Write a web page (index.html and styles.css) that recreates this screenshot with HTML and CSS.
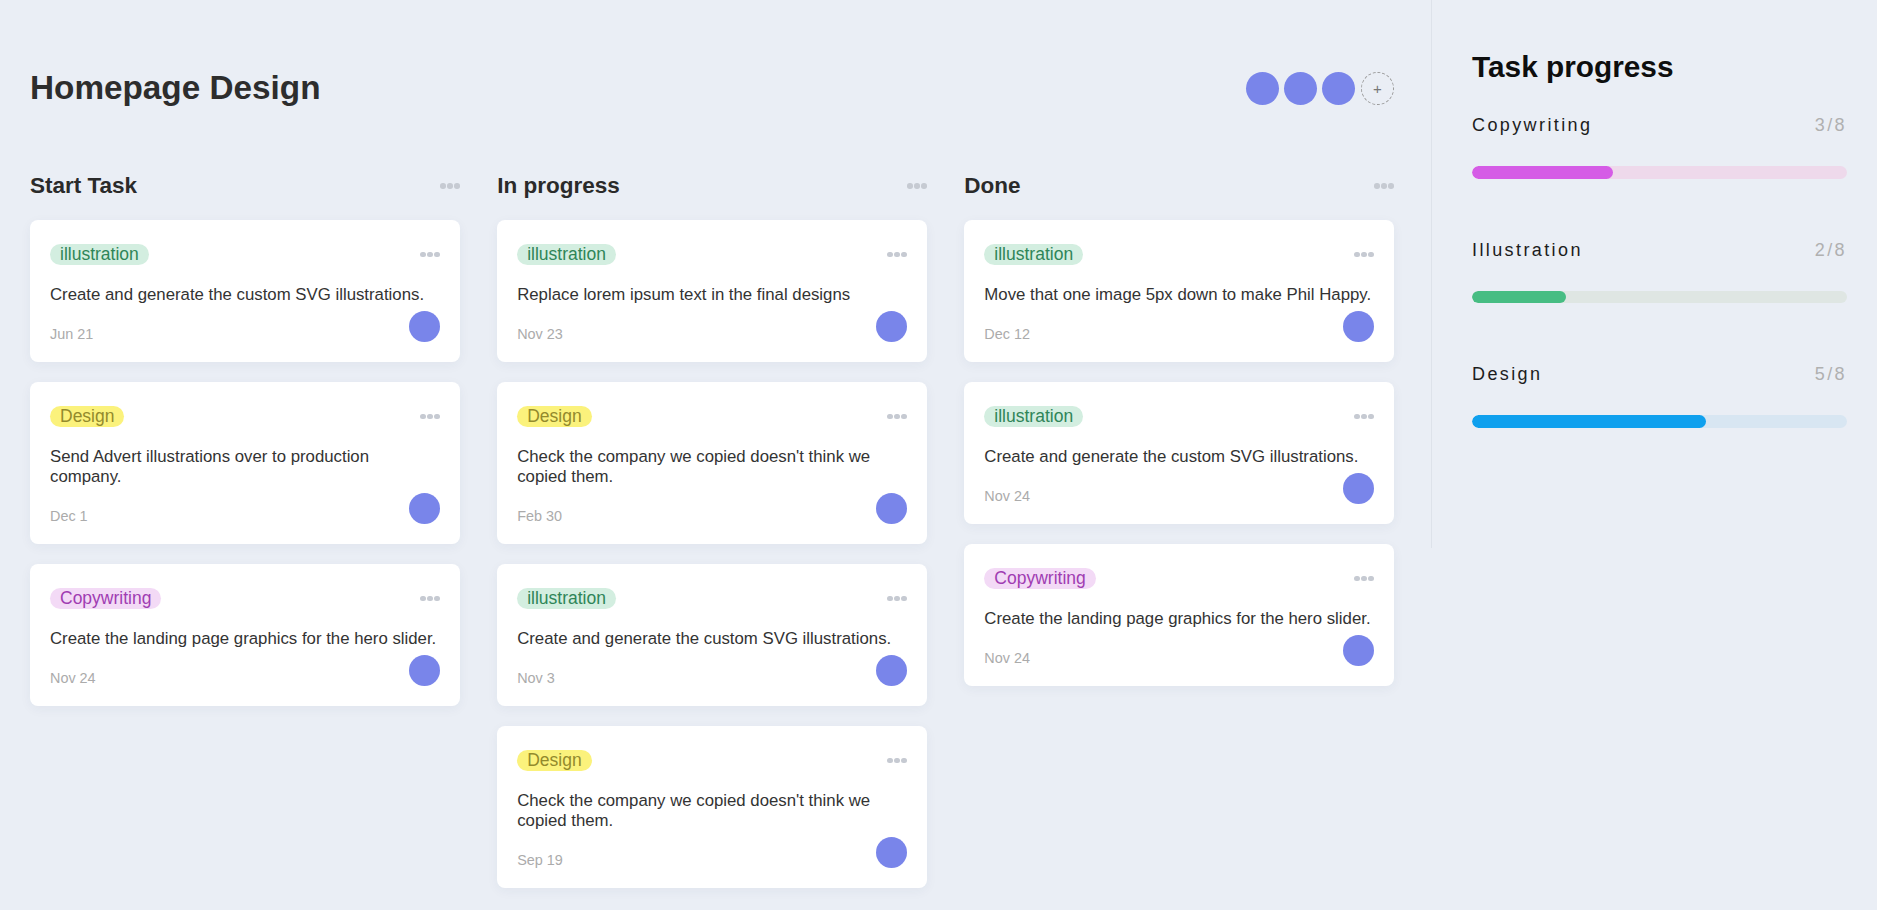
FILE: index.html
```html
<!DOCTYPE html>
<html lang="en">
<head>
  <meta charset="UTF-8">
  <title>Homepage Design</title>
  <link rel="stylesheet" href="styles.css">
</head>
<body>
  <div class="page">
    <main class="board">
      <header class="board-head">
        <h1>Homepage Design</h1>
        <div class="members">
          <span class="member"></span>
          <span class="member"></span>
          <span class="member"></span>
          <span class="member-add">+</span>
        </div>
      </header>

      <div class="columns">
        <!-- Start Task -->
        <section class="column">
          <div class="column-head">
            <h2>Start Task</h2>
            <span class="dots"><i></i><i></i><i></i></span>
          </div>
          <div class="card">
            <div class="card-top"><span class="tag tag-illu">illustration</span><span class="dots"><i></i><i></i><i></i></span></div>
            <p class="card-text">Create and generate the custom SVG illustrations.</p>
            <div class="card-foot"><span class="date">Jun 21</span><span class="avatar"></span></div>
          </div>
          <div class="card">
            <div class="card-top"><span class="tag tag-design">Design</span><span class="dots"><i></i><i></i><i></i></span></div>
            <p class="card-text">Send Advert illustrations over to production company.</p>
            <div class="card-foot"><span class="date">Dec 1</span><span class="avatar"></span></div>
          </div>
          <div class="card">
            <div class="card-top"><span class="tag tag-copy">Copywriting</span><span class="dots"><i></i><i></i><i></i></span></div>
            <p class="card-text">Create the landing page graphics for the hero slider.</p>
            <div class="card-foot"><span class="date">Nov 24</span><span class="avatar"></span></div>
          </div>
        </section>

        <!-- In progress -->
        <section class="column">
          <div class="column-head">
            <h2>In progress</h2>
            <span class="dots"><i></i><i></i><i></i></span>
          </div>
          <div class="card">
            <div class="card-top"><span class="tag tag-illu">illustration</span><span class="dots"><i></i><i></i><i></i></span></div>
            <p class="card-text">Replace lorem ipsum text in the final designs</p>
            <div class="card-foot"><span class="date">Nov 23</span><span class="avatar"></span></div>
          </div>
          <div class="card">
            <div class="card-top"><span class="tag tag-design">Design</span><span class="dots"><i></i><i></i><i></i></span></div>
            <p class="card-text">Check the company we copied doesn't think we copied them.</p>
            <div class="card-foot"><span class="date">Feb 30</span><span class="avatar"></span></div>
          </div>
          <div class="card">
            <div class="card-top"><span class="tag tag-illu">illustration</span><span class="dots"><i></i><i></i><i></i></span></div>
            <p class="card-text">Create and generate the custom SVG illustrations.</p>
            <div class="card-foot"><span class="date">Nov 3</span><span class="avatar"></span></div>
          </div>
          <div class="card">
            <div class="card-top"><span class="tag tag-design">Design</span><span class="dots"><i></i><i></i><i></i></span></div>
            <p class="card-text">Check the company we copied doesn't think we copied them.</p>
            <div class="card-foot"><span class="date">Sep 19</span><span class="avatar"></span></div>
          </div>
        </section>

        <!-- Done -->
        <section class="column">
          <div class="column-head">
            <h2>Done</h2>
            <span class="dots"><i></i><i></i><i></i></span>
          </div>
          <div class="card">
            <div class="card-top"><span class="tag tag-illu">illustration</span><span class="dots"><i></i><i></i><i></i></span></div>
            <p class="card-text">Move that one image 5px down to make Phil Happy.</p>
            <div class="card-foot"><span class="date">Dec 12</span><span class="avatar"></span></div>
          </div>
          <div class="card">
            <div class="card-top"><span class="tag tag-illu">illustration</span><span class="dots"><i></i><i></i><i></i></span></div>
            <p class="card-text">Create and generate the custom SVG illustrations.</p>
            <div class="card-foot"><span class="date">Nov 24</span><span class="avatar"></span></div>
          </div>
          <div class="card">
            <div class="card-top"><span class="tag tag-copy">Copywriting</span><span class="dots"><i></i><i></i><i></i></span></div>
            <p class="card-text">Create the landing page graphics for the hero slider.</p>
            <div class="card-foot"><span class="date">Nov 24</span><span class="avatar"></span></div>
          </div>
        </section>
      </div>
    </main>

    <aside class="progress">
      <h2>Task progress</h2>
      <div class="progress-item">
        <div class="progress-row"><span class="progress-name">Copywriting</span><span class="progress-count">3/8</span></div>
        <div class="bar bar-copy"><div class="bar-fill" style="width: 37.5%"></div></div>
      </div>
      <div class="progress-item">
        <div class="progress-row"><span class="progress-name">Illustration</span><span class="progress-count">2/8</span></div>
        <div class="bar bar-illu"><div class="bar-fill" style="width: 25%"></div></div>
      </div>
      <div class="progress-item">
        <div class="progress-row"><span class="progress-name">Design</span><span class="progress-count">5/8</span></div>
        <div class="bar bar-design"><div class="bar-fill" style="width: 62.5%"></div></div>
      </div>
    </aside>
  </div>
</body>
</html>
```

FILE: styles.css
```css
body {
  margin: 0;
  background: #eaeef5;
  font-family: "Liberation Sans", Arial, sans-serif;
  color: #333;
}
.page {
  display: flex;
  align-items: flex-start;
}

/* board */
.board {
  flex: 0 0 1431px;
  box-sizing: border-box;
  padding: 69px 37px 0 30px;
}
.board-head {
  display: flex;
  align-items: center;
  justify-content: space-between;
  margin-bottom: 66px;
}
.board-head h1 {
  margin: 0;
  font-size: 33.3px;
  font-weight: bold;
  color: #2d2d2d;
}
.members {
  display: flex;
  align-items: center;
  gap: 5px;
}
.member {
  width: 33px;
  height: 33px;
  border-radius: 50%;
  background: #7985ea;
}
.member-add {
  box-sizing: border-box;
  width: 33px;
  height: 33px;
  margin-left: 1px;
  border-radius: 50%;
  border: 1px dashed #9a9a9a;
  display: flex;
  align-items: center;
  justify-content: center;
  font-size: 15px;
  color: #777;
}

.columns {
  display: grid;
  grid-template-columns: repeat(3, 1fr);
  column-gap: 37.5px;
  align-items: start;
}
.column-head {
  display: flex;
  align-items: center;
  justify-content: space-between;
  margin-bottom: 21px;
}
.column-head h2 {
  margin: 0;
  font-size: 22.5px;
  font-weight: bold;
  color: #2a2a2a;
}
.dots {
  display: flex;
  gap: 1.5px;
}
.dots i {
  width: 5.5px;
  height: 5.5px;
  border-radius: 50%;
  background: #c6cad2;
}

/* cards */
.card {
  background: #fff;
  border-radius: 8px;
  padding: 24px 20px 20px;
  margin-bottom: 20px;
  box-shadow: 0 3px 12px rgba(40, 50, 90, 0.05);
}
.card-top {
  display: flex;
  align-items: center;
  justify-content: space-between;
  height: 21px;
}
.tag {
  height: 21px;
  line-height: 21px;
  padding: 0 10px;
  border-radius: 11px;
  font-size: 17.5px;
}
.tag-illu {
  background: #d3eee0;
  color: #2f8558;
}
.tag-design {
  background: #fbf27c;
  color: #938a2c;
}
.tag-copy {
  background: #f3daf6;
  color: #a03db2;
}
.card-text {
  margin: 20px 0 0;
  font-size: 16.8px;
  line-height: 20px;
  color: #333;
}
.card-foot {
  display: flex;
  align-items: flex-end;
  justify-content: space-between;
  margin-top: 6px;
}
.date {
  font-size: 14.4px;
  color: #ababab;
}
.avatar {
  width: 31px;
  height: 31px;
  border-radius: 50%;
  background: #7985ea;
}

/* progress sidebar */
.progress {
  flex: 1;
  height: 548px;
  box-sizing: border-box;
  border-left: 1px solid #dde2ea;
  padding: 50px 30px 0 40px;
}
.progress h2 {
  margin: 0 0 31px;
  font-size: 29.8px;
  font-weight: bold;
  color: #0e0e0e;
}
.progress-item {
  margin-bottom: 61px;
}
.progress-row {
  display: flex;
  justify-content: space-between;
  font-size: 18px;
  letter-spacing: 2.4px;
}
.progress-name {
  color: #1c1c1c;
}
.progress-count {
  color: #b0b0b0;
}
.bar {
  height: 12.5px;
  margin-top: 30px;
  border-radius: 7px;
  overflow: hidden;
}
.bar-fill {
  height: 100%;
  border-radius: 7px;
}
.bar-copy { background: #eed9eb; }
.bar-copy .bar-fill { background: #d55ce6; }
.bar-illu { background: #dfe6e3; }
.bar-illu .bar-fill { background: #47bd83; }
.bar-design { background: #d8e6f2; }
.bar-design .bar-fill { background: #0fa0ee; }
```
